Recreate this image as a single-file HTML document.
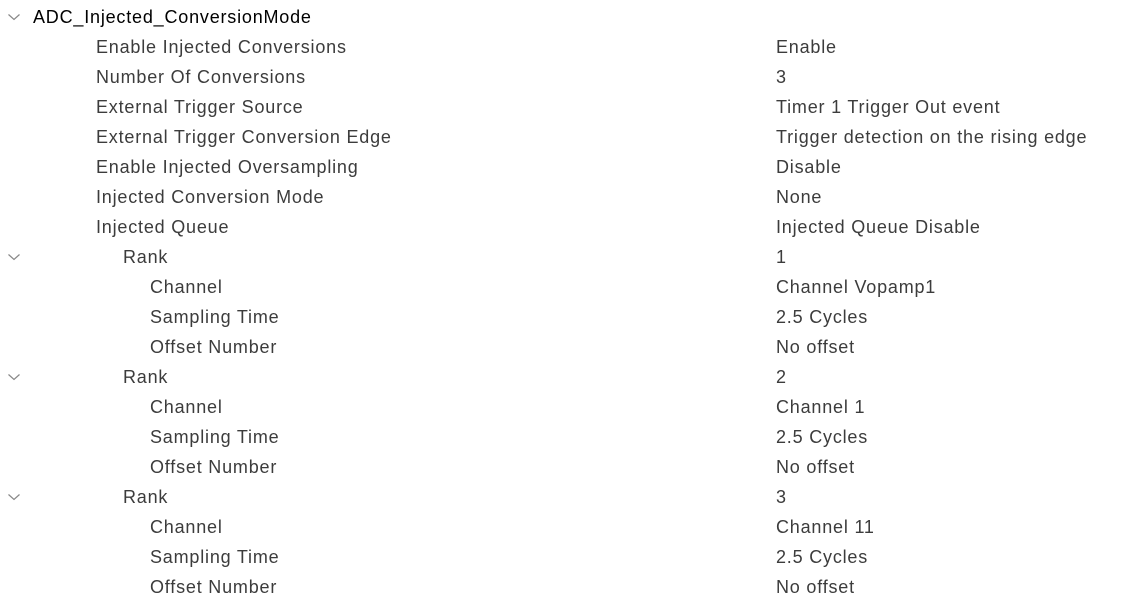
<!DOCTYPE html>
<html><head><style>
body{margin:0;width:1131px;height:606px;background:#fff;font-family:"Liberation Sans",Arial,sans-serif;font-size:18px;letter-spacing:0.8px;color:#3c3c3c;overflow:hidden;position:relative}
.r{position:absolute;height:30px;line-height:30px;white-space:nowrap}
.v{position:absolute;left:776px;height:30px;line-height:30px;white-space:nowrap}
svg{position:absolute;left:7px}
</style></head><body>
<svg style="top:13px" width="14" height="8"><path d="M1.5 1.5 L7 6.5 L12.5 1.5" fill="none" stroke="#888" stroke-width="1.2"/></svg>
<div class="r" style="top:2px;left:33px;color:#000">ADC_Injected_ConversionMode</div>

<div class="r" style="top:32px;left:96px">Enable Injected Conversions</div><div class="v" style="top:32px">Enable</div>
<div class="r" style="top:62px;left:96px">Number Of Conversions</div><div class="v" style="top:62px">3</div>
<div class="r" style="top:92px;left:96px">External Trigger Source</div><div class="v" style="top:92px">Timer 1 Trigger Out event</div>
<div class="r" style="top:122px;left:96px">External Trigger Conversion Edge</div><div class="v" style="top:122px">Trigger detection on the rising edge</div>
<div class="r" style="top:152px;left:96px">Enable Injected Oversampling</div><div class="v" style="top:152px">Disable</div>
<div class="r" style="top:182px;left:96px">Injected Conversion Mode</div><div class="v" style="top:182px">None</div>
<div class="r" style="top:212px;left:96px">Injected Queue</div><div class="v" style="top:212px">Injected Queue Disable</div>

<svg style="top:253px" width="14" height="8"><path d="M1.5 1.5 L7 6.5 L12.5 1.5" fill="none" stroke="#888" stroke-width="1.2"/></svg>
<div class="r" style="top:242px;left:123px">Rank</div><div class="v" style="top:242px">1</div>
<div class="r" style="top:272px;left:150px">Channel</div><div class="v" style="top:272px">Channel Vopamp1</div>
<div class="r" style="top:302px;left:150px">Sampling Time</div><div class="v" style="top:302px">2.5 Cycles</div>
<div class="r" style="top:332px;left:150px">Offset Number</div><div class="v" style="top:332px">No offset</div>

<svg style="top:373px" width="14" height="8"><path d="M1.5 1.5 L7 6.5 L12.5 1.5" fill="none" stroke="#888" stroke-width="1.2"/></svg>
<div class="r" style="top:362px;left:123px">Rank</div><div class="v" style="top:362px">2</div>
<div class="r" style="top:392px;left:150px">Channel</div><div class="v" style="top:392px">Channel 1</div>
<div class="r" style="top:422px;left:150px">Sampling Time</div><div class="v" style="top:422px">2.5 Cycles</div>
<div class="r" style="top:452px;left:150px">Offset Number</div><div class="v" style="top:452px">No offset</div>

<svg style="top:493px" width="14" height="8"><path d="M1.5 1.5 L7 6.5 L12.5 1.5" fill="none" stroke="#888" stroke-width="1.2"/></svg>
<div class="r" style="top:482px;left:123px">Rank</div><div class="v" style="top:482px">3</div>
<div class="r" style="top:512px;left:150px">Channel</div><div class="v" style="top:512px">Channel 11</div>
<div class="r" style="top:542px;left:150px">Sampling Time</div><div class="v" style="top:542px">2.5 Cycles</div>
<div class="r" style="top:572px;left:150px">Offset Number</div><div class="v" style="top:572px">No offset</div>
</body></html>
